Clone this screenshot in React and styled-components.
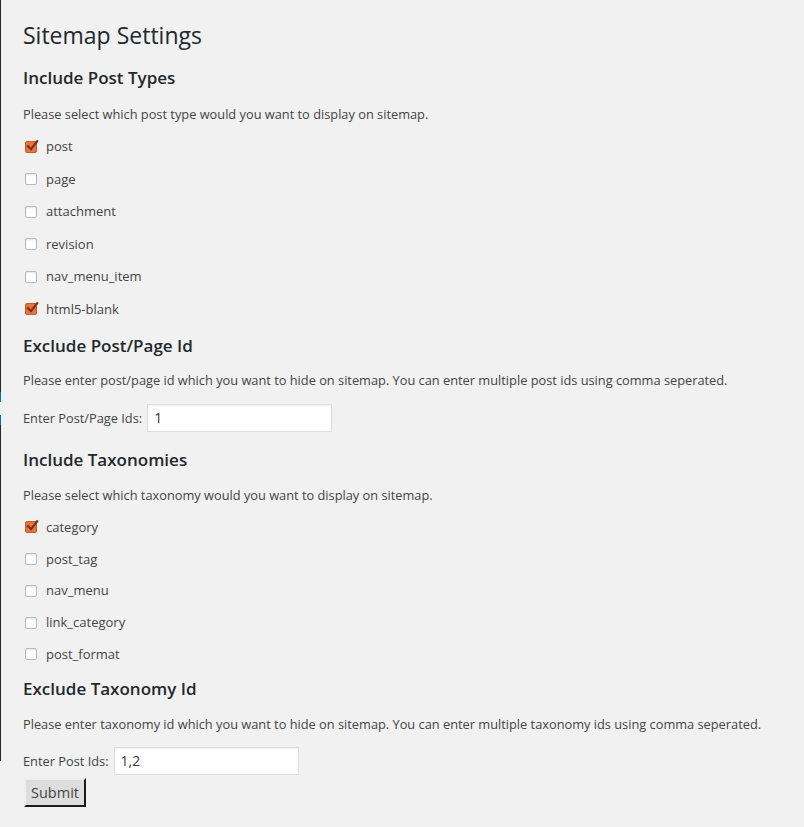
import React from "react";
import styled, { createGlobalStyle } from "styled-components";

const Global = createGlobalStyle`
  html, body { margin: 0; padding: 0; background: #f1f1f1; }
  body { font-family: "Open Sans", "Liberation Sans", sans-serif; color: #444; font-size: 13px; }
`;

const Page = styled.div`
  display: flex;
  align-items: flex-start;
  min-height: 827px;
  background: #f1f1f1;
`;

const Sidebar = styled.div`
  width: 1px;
  height: 761px;
  flex: none;
  background: linear-gradient(
    to bottom,
    #23282d 0 392px,
    #0073aa 392px 402px,
    transparent 402px 415px,
    #0073aa 415px 425px,
    #23282d 425px 761px
  );
`;

const Wrap = styled.div`
  display: flex;
  flex-direction: column;
  padding: 21px 0 0 22px;
  flex: 1;
`;

const Title = styled.h2`
  margin: 0;
  font-size: 23px;
  font-weight: 400;
  line-height: 29px;
  color: #23282d;
`;

const Heading = styled.h3`
  margin: ${(p) => p.$top}px 0 0;
  font-size: 17px;
  font-weight: 600;
  line-height: 22px;
  color: #23282d;
`;

const Desc = styled.p`
  margin: ${(p) => p.$top}px 0 0;
  font-size: 12.8px;
  line-height: 18px;
  color: #444;
`;

const List = styled.div`
  display: flex;
  flex-direction: column;
  gap: ${(p) => p.$gap}px;
  margin-top: 13px;
`;

const Row = styled.label`
  display: flex;
  align-items: center;
  height: 20px;
  font-size: 13px;
  color: #444;
`;

const Box = styled.span`
  position: relative;
  box-sizing: border-box;
  width: 12px;
  height: 12px;
  margin: 1px 9px 0 2px;
  border-radius: 2px;
  border: 1px solid ${(p) => (p.$checked ? "#c55a2d" : "#b4b9be")};
  background: ${(p) => (p.$checked ? "#e5743f" : "#fff")};
  box-shadow: ${(p) => (p.$checked ? "none" : "inset 0 1px 2px rgba(0,0,0,.1)")};
  flex: none;
`;

const Tick = styled.svg`
  position: absolute;
  left: 0;
  top: -3px;
  width: 13px;
  height: 13px;
`;

const Field = styled.div`
  display: flex;
  align-items: center;
  margin-top: ${(p) => p.$top}px;
  font-size: 12.8px;
  color: #444;
`;

const Input = styled.input`
  box-sizing: border-box;
  width: 185px;
  height: 28px;
  margin-left: 5px;
  padding: 0 6px;
  border: 1px solid #ddd;
  background: #fff;
  box-shadow: inset 0 1px 2px rgba(0, 0, 0, 0.07);
  font-family: "Open Sans", "Liberation Sans", sans-serif;
  font-size: 14px;
  color: #32373c;
  outline: none;
`;

const Button = styled.button`
  align-self: flex-start;
  margin: 3px 0 0 1px;
  box-sizing: border-box;
  width: 62px;
  height: 29px;
  padding: 0;
  background: #dddddd;
  border: 2px outset #eeeeee;
  border-right-color: #6f6f6f;
  border-bottom-color: #6f6f6f;
  font-family: "Open Sans", "Liberation Sans", sans-serif;
  font-size: 14.5px;
  color: #444;
`;

function Check({ label, checked }) {
  return (
    <Row>
      <Box $checked={checked}>
        {checked && (
          <Tick viewBox="0 0 13 13">
            <path d="M2 7.2 L5 10.2 L11.2 2.2" fill="none" stroke="#7b3216" strokeWidth="2.2" strokeLinecap="square" />
          </Tick>
        )}
      </Box>
      {label}
    </Row>
  );
}

const postTypes = [
  ["post", true],
  ["page", false],
  ["attachment", false],
  ["revision", false],
  ["nav_menu_item", false],
  ["html5-blank", true],
];

const taxonomies = [
  ["category", true],
  ["post_tag", false],
  ["nav_menu", false],
  ["link_category", false],
  ["post_format", false],
];

export default function App() {
  return (
    <>
      <Global />
      <Page>
        <Sidebar />
        <Wrap>
          <Title>Sitemap Settings</Title>
          <Heading $top={17}>Include Post Types</Heading>
          <Desc $top={16}>Please select which post type would you want to display on sitemap.</Desc>
          <List $gap={12.6}>
            {postTypes.map(([l, c]) => (
              <Check key={l} label={l} checked={c} />
            ))}
          </List>
          <Heading $top={16}>Exclude Post/Page Id</Heading>
          <Desc $top={14}>
            Please enter post/page id which you want to hide on sitemap. You can enter multiple post ids using comma seperated.
          </Desc>
          <Field $top={15}>
            Enter Post/Page Ids:
            <Input defaultValue="1" />
          </Field>
          <Heading $top={17}>Include Taxonomies</Heading>
          <Desc $top={15}>Please select which taxonomy would you want to display on sitemap.</Desc>
          <List $gap={11.7}>
            {taxonomies.map(([l, c]) => (
              <Check key={l} label={l} checked={c} />
            ))}
          </List>
          <Heading $top={14}>Exclude Taxonomy Id</Heading>
          <Desc $top={15}>
            Please enter taxonomy id which you want to hide on sitemap. You can enter multiple taxonomy ids using comma seperated.
          </Desc>
          <Field $top={14}>
            Enter Post Ids:
            <Input defaultValue="1,2" />
          </Field>
          <Button type="button">Submit</Button>
        </Wrap>
      </Page>
    </>
  );
}
